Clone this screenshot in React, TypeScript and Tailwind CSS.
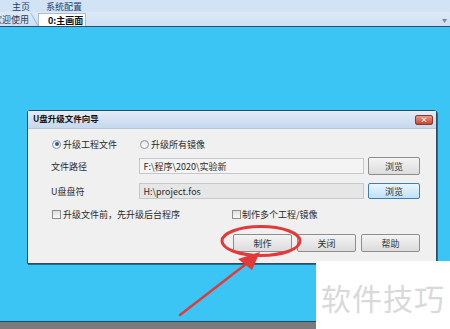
import React from 'react'

const font = { fontFamily: '"Noto Sans CJK SC", "Liberation Sans", sans-serif' }

function Radio({ checked }: { checked?: boolean }) {
  return (
    <span className="w-[9px] h-[9px] rounded-full border border-[#8a939c] bg-gradient-to-b from-[#e4e6e8] to-[#fdfdfd] flex items-center justify-center shrink-0">
      {checked && <span className="w-[4px] h-[4px] rounded-full bg-[#2a5ea8]" />}
    </span>
  )
}

function Check() {
  return <span className="w-[9px] h-[9px] border border-[#8f8f8f] bg-gradient-to-b from-[#dedede] to-[#fafafa] shrink-0" />
}

function Btn({ label, w }: { label: string; w: string }) {
  return (
    <button className={`${w} h-[18px] border border-[#8d8d8d] rounded-[2px] bg-gradient-to-b from-[#f4f4f4] to-[#dcdcdc] text-[9px] text-[#333] leading-none`}>
      {label}
    </button>
  )
}

export default function App() {
  return (
    <div className="relative w-[450px] h-[329px] overflow-hidden flex flex-col text-[#2a2a2a]" style={font}>
      {/* menu */}
      <div className="h-[12px] bg-[#d3e3f6] flex items-center text-[9px] text-[#213f6e] leading-none">
        <span className="ml-[12px]">主页</span>
        <span className="ml-[16px]">系统配置</span>
      </div>
      {/* tabs */}
      <div className="h-[14px] bg-gradient-to-b from-[#dde9f7] to-[#cfdff2] flex items-end text-[9px] leading-none relative">
        <span className="h-[13px] flex items-center -ml-[7px] pr-[5px] text-[#2b3b55] border-r border-[#9fb3cc] skew-x-[30deg]">
          <span className="-skew-x-[30deg]">欢迎使用</span>
        </span>
        <span className="h-[13px] ml-[3px] w-[48px] bg-white border-x border-t border-[#a9bcd4] flex items-center pl-[9px] font-bold text-[#111]">0:主画面</span>
        <span className="absolute right-[3px] top-[5px] text-[5px] text-[#7a8799]">▼</span>
      </div>
      <div className="h-px bg-[#2b4e6a]" />
      {/* desktop */}
      <div className="flex-1 bg-[#3bc5f4] pl-[27px] pt-[83px]">
        <div className="w-[410px] h-[154px] border border-[#33495e] rounded-t-[3px] bg-[#f0f0f0] flex flex-col shadow-[1px_1px_0_#1f6f94]">
          <div className="h-[18px] bg-gradient-to-b from-[#e3ecf7] to-[#c6d8ee] flex items-center justify-between pl-[5px] pr-[3px] border-b border-[#b7c8dc]">
            <span className="text-[8.5px] font-bold text-[#111] leading-none -mt-[2px]">U盘升级文件向导</span>
            <span className="w-[18px] h-[10px] rounded-[2px] bg-gradient-to-b from-[#e49a8a] to-[#c5442e] border border-[#8c3a2d] text-white text-[7px] leading-none flex items-center justify-center font-bold">×</span>
          </div>
          <div className="flex-1 pl-[24px] pr-[16px] pt-[9px] text-[9px] leading-none">
            <div className="h-[12px] flex items-center">
              <div className="w-[88px] flex items-center gap-[2px]">
                <Radio checked />
                <span>升级工程文件</span>
              </div>
              <div className="flex items-center gap-[2px]">
                <Radio />
                <span>升级所有镜像</span>
              </div>
            </div>
            <div className="mt-[8px] h-[16px] flex items-center -ml-[1px]">
              <span className="w-[89px]">文件路径</span>
              <div className="w-[226px] h-[16px] border border-[#c4c9cf] bg-[#f4f4f4] pl-[3px] flex items-center">F:\程序\2020\实验新</div>
              <div className="ml-[4px]"><Btn label="浏览" w="w-[52px]" /></div>
            </div>
            <div className="mt-[9px] h-[16px] flex items-center -ml-[1px]">
              <span className="w-[89px]">U盘盘符</span>
              <div className="w-[226px] h-[16px] border border-[#c4c9cf] bg-[#e6e6e6] pl-[3px] flex items-center">H:\project.fos</div>
              <div className="ml-[4px]">
                <button className="w-[52px] h-[16px] border border-[#3c7fb1] rounded-[2px] bg-gradient-to-b from-[#eaf6fd] to-[#bfe2f7] text-[9px] leading-none">浏览</button>
              </div>
            </div>
            <div className="mt-[9px] h-[12px] flex items-center">
              <div className="w-[180px] flex items-center gap-[2px]">
                <Check />
                <span>升级文件前，先升级后台程序</span>
              </div>
              <div className="flex items-center gap-[1px]">
                <Check />
                <span>制作多个工程/镜像</span>
              </div>
            </div>
            <div className="mt-[14px] flex justify-end gap-[5px]">
              <Btn label="制作" w="w-[59px]" />
              <Btn label="关闭" w="w-[59px]" />
              <Btn label="帮助" w="w-[59px]" />
            </div>
          </div>
        </div>
      </div>
      <div className="h-px bg-[#1d4a60]" />
      <div className="h-[7px] bg-[#7b7b7b]" />

      {/* annotations */}
      <svg className="absolute inset-0 pointer-events-none" width="450" height="329" viewBox="0 0 450 329">
        <ellipse cx="261" cy="241" rx="39" ry="14.5" fill="none" stroke="#e23a3a" strokeWidth="3" />
        <line x1="180" y1="315" x2="246" y2="264" stroke="#e23a3a" strokeWidth="2.5" strokeLinecap="round" />
        <polygon points="260,252 238,259 252,270" fill="#e23a3a" />
      </svg>
      <div className="absolute left-[316px] top-[261px] w-[134px] h-[68px] bg-white flex items-center justify-center">
        <span className="text-[30px] leading-none text-[#d9d9d9] mt-[3px] tracking-[1px]">软件技巧</span>
      </div>
    </div>
  )
}
